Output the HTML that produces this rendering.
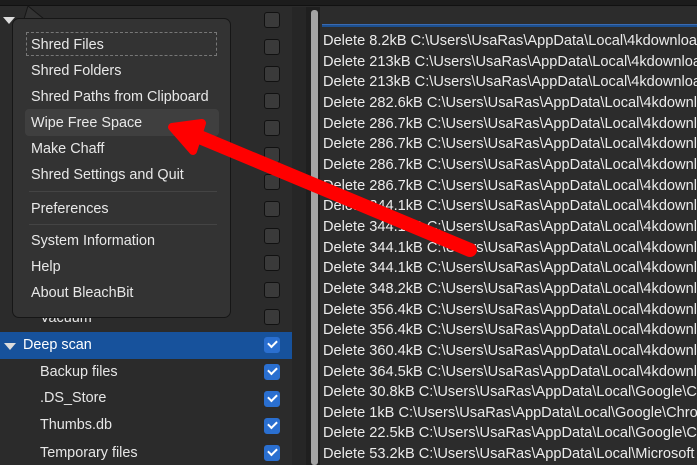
<!DOCTYPE html>
<html style="overflow:hidden"><head><style>
*{margin:0;padding:0;box-sizing:border-box}
html,body{width:697px;height:465px;overflow:hidden}
body{background:#2b2b2b;font-family:"Liberation Sans",sans-serif;font-size:14px;color:#e6e6e6;position:relative}
.top{position:absolute;left:0;top:0;width:697px;height:6px;background:#1c1c1c;border-bottom:1px solid #111}
.left{position:absolute;left:0;top:7px;width:292px;height:458px;background:#2b2b2b}
.strip{position:absolute;left:292px;top:7px;width:14px;height:458px;background:#262626}
.strip2{position:absolute;left:306px;top:7px;width:14px;height:458px;background:#1f1f1f}
.thumb{position:absolute;left:311px;top:10px;width:7px;height:455px;background:#a3a3a3;border-radius:3px}
.right{position:absolute;left:320px;top:7px;width:377px;height:458px;background:#2c2c2c;overflow:hidden}
.hdr{position:absolute;left:322px;top:24px;width:375px;height:3px;background:#1c4f8f;border-top:1px solid #3a6ab0}
.cb{position:absolute;left:264px;width:16px;height:16px;border:1px solid #111;border-radius:3px;background:#3a3a3a}
.cb.on{background:#2a6fd0;border-color:#2a6fd0}
.cb.on::after{content:"";position:absolute;left:3px;top:2px;width:7px;height:4px;border-left:2.5px solid #fff;border-bottom:2.5px solid #fff;transform:rotate(-45deg)}
.row{position:absolute;white-space:nowrap;font-size:14.4px}
.sel{position:absolute;left:0;top:332px;width:292px;height:27px;background:#17529c}
.tri{position:absolute;width:0;height:0;border-left:6px solid transparent;border-right:6px solid transparent;border-top:7px solid #ddd}
.log{position:absolute;left:3px;top:24px;line-height:20.65px;white-space:nowrap;color:#ececec;font-size:14.6px}
.menu{position:absolute;left:12px;top:18px;width:219px;height:300px;background:#333;border:1px solid #161616;border-radius:7px}
.mi{position:absolute;left:18px;white-space:nowrap;color:#e8e8e8;font-size:14.4px}
.sep{position:absolute;left:16px;width:188px;height:1px;background:#444}
</style></head><body>
<div class="top"></div>
<div class="left"></div>
<div class="strip"></div>
<div class="strip2"></div>
<div class="right"><div class="log">Delete 8.2kB C:\Users\UsaRas\AppData\Local\4kdownload<br>Delete 213kB C:\Users\UsaRas\AppData\Local\4kdownload<br>Delete 213kB C:\Users\UsaRas\AppData\Local\4kdownload<br>Delete 282.6kB C:\Users\UsaRas\AppData\Local\4kdownload<br>Delete 286.7kB C:\Users\UsaRas\AppData\Local\4kdownload<br>Delete 286.7kB C:\Users\UsaRas\AppData\Local\4kdownload<br>Delete 286.7kB C:\Users\UsaRas\AppData\Local\4kdownload<br>Delete 286.7kB C:\Users\UsaRas\AppData\Local\4kdownload<br>Delete 344.1kB C:\Users\UsaRas\AppData\Local\4kdownload<br>Delete 344.1kB C:\Users\UsaRas\AppData\Local\4kdownload<br>Delete 344.1kB C:\Users\UsaRas\AppData\Local\4kdownload<br>Delete 344.1kB C:\Users\UsaRas\AppData\Local\4kdownload<br>Delete 348.2kB C:\Users\UsaRas\AppData\Local\4kdownload<br>Delete 356.4kB C:\Users\UsaRas\AppData\Local\4kdownload<br>Delete 356.4kB C:\Users\UsaRas\AppData\Local\4kdownload<br>Delete 360.4kB C:\Users\UsaRas\AppData\Local\4kdownload<br>Delete 364.5kB C:\Users\UsaRas\AppData\Local\4kdownload<br>Delete 30.8kB C:\Users\UsaRas\AppData\Local\Google\Chrome<br>Delete 1kB C:\Users\UsaRas\AppData\Local\Google\Chrome<br>Delete 22.5kB C:\Users\UsaRas\AppData\Local\Google\Chrome<br>Delete 53.2kB C:\Users\UsaRas\AppData\Local\Microsoft</div></div>
<div class="thumb"></div>
<div class="hdr"></div>
<div class="tri" style="left:3px;top:17px"></div>
<div class="sel"></div>
<div class="tri" style="left:4px;top:343px"></div>
<div class="row" style="left:23px;top:337px;color:#fff">Deep scan</div>
<div class="row" style="left:40px;top:310px">Vacuum</div>
<div class="row" style="left:40px;top:364px">Backup files</div>
<div class="row" style="left:40px;top:390px">.DS_Store</div>
<div class="row" style="left:40px;top:417px">Thumbs.db</div>
<div class="row" style="left:40px;top:445px">Temporary files</div>
<div class="cb" style="top:12px"></div>
<div class="cb" style="top:39px"></div>
<div class="cb" style="top:66px"></div>
<div class="cb" style="top:93px"></div>
<div class="cb" style="top:120px"></div>
<div class="cb" style="top:147px"></div>
<div class="cb" style="top:174px"></div>
<div class="cb" style="top:201px"></div>
<div class="cb" style="top:228px"></div>
<div class="cb" style="top:255px"></div>
<div class="cb" style="top:282px"></div>
<div class="cb" style="top:309px"></div>
<div class="cb on" style="top:337px"></div>
<div class="cb on" style="top:364px"></div>
<div class="cb on" style="top:391px"></div>
<div class="cb on" style="top:418px"></div>
<div class="cb on" style="top:445px"></div>
<svg style="position:absolute;left:0;top:0" width="697" height="465">
<path d="M24 19 L28 6 L44 19 Z" fill="#333" stroke="#161616"/>
</svg>
<div class="menu">
<div style="position:absolute;left:13px;top:13px;width:191px;height:24px;border:1px dashed #777"></div>
<div style="position:absolute;left:12px;top:90px;width:194px;height:27px;background:#3f3f3f;border-radius:4px"></div>
<div class="mi" style="top:18px">Shred Files</div>
<div class="mi" style="top:44px">Shred Folders</div>
<div class="mi" style="top:70px">Shred Paths from Clipboard</div>
<div class="mi" style="top:96px">Wipe Free Space</div>
<div class="mi" style="top:122px">Make Chaff</div>
<div class="mi" style="top:148px">Shred Settings and Quit</div>
<div class="sep" style="top:172px"></div>
<div class="mi" style="top:182px">Preferences</div>
<div class="sep" style="top:205px"></div>
<div class="mi" style="top:214px">System Information</div>
<div class="mi" style="top:240px">Help</div>
<div class="mi" style="top:266px">About BleachBit</div>
</div>
<svg style="position:absolute;left:0;top:0" width="697" height="465">
<line x1="470" y1="250" x2="190" y2="133" stroke="#ff0000" stroke-width="14" stroke-linecap="round"/>
<path d="M172 127 L202 123 L193 151 Z" fill="#ff0000" stroke="#ff0000" stroke-width="8" stroke-linejoin="round"/>
</svg>
</body></html>
